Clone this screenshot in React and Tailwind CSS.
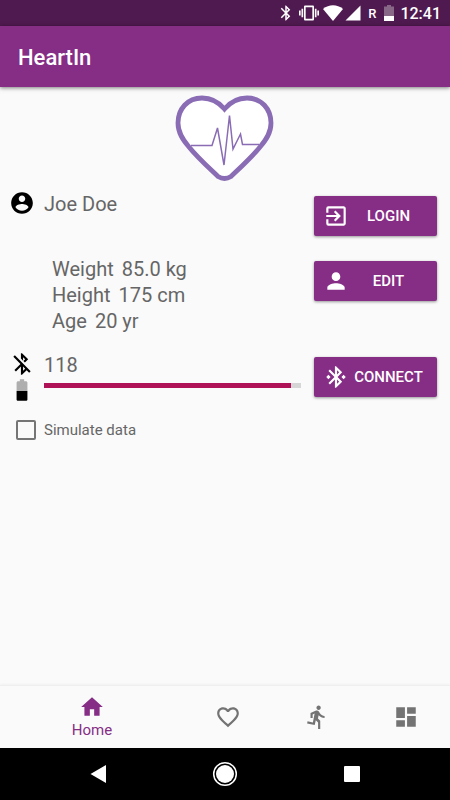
import {
  MdBluetooth,
  MdBluetoothConnected,
  MdBluetoothDisabled,
  MdBattery50,
  MdDashboard,
  MdDirectionsRun,
  MdExitToApp,
  MdFavoriteBorder,
  MdPerson,
  MdSignalCellular4Bar,
  MdVibration,
} from "react-icons/md";

const AccountIcon = () => (
  <svg viewBox="0 0 24 24" className="size-[26px] text-black" fill="currentColor">
    <path d="M12 2C6.48 2 2 6.48 2 12s4.48 10 10 10 10-4.48 10-10S17.52 2 12 2zm0 3c1.66 0 3 1.34 3 3s-1.34 3-3 3-3-1.34-3-3 1.34-3 3-3zm0 14.2c-2.5 0-4.71-1.28-6-3.22.03-1.99 4-3.08 6-3.08 1.99 0 5.97 1.09 6 3.08-1.29 1.94-3.5 3.22-6 3.22z" />
  </svg>
);

const HomeIcon = () => (
  <svg viewBox="0 0 24 24" className="size-[26px]" fill="currentColor">
    <path d="M10 20v-6h4v6h5v-8h3L12 3 2 12h3v8z" />
  </svg>
);

const HeartLogo = () => (
  <svg viewBox="0 0 100 86" className="h-[86px] w-[100px]" fill="none" stroke="#8a6cb5">
    <path
      d="M49.500 14C44 7.500 36 3 27 3C12.500 3 3 14 3 28C3 38 8 45 14 52C22 62 33 72 43 81.500Q49.500 85.500 56 81.500C66 72 77 62 85 52C91 45 96 38 96 28C96 14 86.500 3 72 3C63 3 55 7.500 49.500 14Z"
      fill="#fff"
      strokeWidth="4.800"
    />
    <path d="M16 50.500H37L42.500 33L49 70L54.500 20.500L58 54L65.500 39L67.500 49.500H84" strokeWidth="1.500" />
  </svg>
);

const StatusBar = () => (
  <div className="flex h-[26px] items-center justify-end bg-[#4f1a4f] pr-[9px] text-white">
    <MdBluetooth className="size-[18px]" />
    <MdVibration className="ml-1 size-5" />
    <svg viewBox="0 0 20 16" className="ml-1 h-4 w-5" fill="currentColor">
      <path d="M10 16L0 4C6 -1 14 -1 20 4Z" />
    </svg>
    <MdSignalCellular4Bar className="ml-px size-[18px]" />
    <span className="ml-[6px] pt-px text-[13px] font-medium">R</span>
    <svg viewBox="0 0 10 16" className="ml-2 h-4 w-[10px]">
      <path d="M0 1.500H3V0H7V1.500H10V11H0Z" fill="#876887" />
      <path d="M0 11H10V16H0Z" fill="#fff" />
    </svg>
    <span className="ml-[6px] pt-[2px] text-base font-medium">12:41</span>
  </div>
);

const ActionButton = ({ icon: Icon, children }) => (
  <button className="flex h-10 w-full items-center rounded-[2px] bg-[#862d86] pr-[9px] pl-[9px] text-[15px] font-medium text-white shadow-[0_1px_3px_rgba(0,0,0,0.4)]">
    <Icon className="size-[26px] shrink-0" />
    <span className="flex-1 pt-px text-center">{children}</span>
  </button>
);

const stats = [
  { name: "Weight", value: "85.0 kg" },
  { name: "Height", value: "175 cm" },
  { name: "Age", value: "20 yr" },
];

const tabs = [
  { name: "Heart rate", icon: MdFavoriteBorder },
  { name: "Activity", icon: MdDirectionsRun },
  { name: "Dashboard", icon: MdDashboard },
];

const App = () => {
  return (
    <div className="flex min-h-screen flex-col bg-[#fafafa] font-['Roboto',sans-serif] text-[#666]">
      <StatusBar />
      <header className="z-10 flex h-[61px] items-center bg-[#862d86] px-[18px] pt-[2px] shadow-[0_1px_4px_rgba(0,0,0,0.5)]">
        <h1 className="text-[22px] font-medium text-white">HeartIn</h1>
      </header>

      <div className="flex justify-center pt-2">
        <HeartLogo />
      </div>

      <main className="flex-1 pt-[15px] pr-[13px] pl-[9px]">
        {/* User */}
        <section className="grid grid-cols-[35px_1fr_123px]">
          <div className="-mt-[6px]">
            <AccountIcon />
          </div>
          <p className="text-xl leading-4">Joe Doe</p>
          <ActionButton icon={MdExitToApp}>LOGIN</ActionButton>
        </section>

        {/* Body data */}
        <section className="mt-5 grid grid-cols-[1fr_123px]">
          <ul className="pl-[43px] text-xl leading-[26px]">
            {stats.map((s) => (
              <li key={s.name} className="flex gap-2">
                <span>{s.name}</span>
                <span>{s.value}</span>
              </li>
            ))}
          </ul>
          <div className="pt-[5px]">
            <ActionButton icon={MdPerson}>EDIT</ActionButton>
          </div>
        </section>

        {/* Device */}
        <section className="mt-[17px] grid grid-cols-[35px_1fr_123px]">
          <div className="text-black">
            <MdBluetoothDisabled className="size-[26px]" />
            <MdBattery50 className="size-[26px]" />
          </div>
          <div className="pr-[13px]">
            <p className="text-xl leading-7">118</p>
            <progress
              aria-label="Device battery"
              value="96"
              max="100"
              className="mt-1 block h-[5px] w-full appearance-none [&::-webkit-progress-bar]:bg-[#d6d6d6] [&::-webkit-progress-value]:bg-[#b01257]"
            />
          </div>
          <div className="pt-[6px]">
            <ActionButton icon={MdBluetoothConnected}>CONNECT</ActionButton>
          </div>
        </section>

        <label className="mt-[17px] flex items-center gap-2 pl-[7px] text-[15px] leading-5">
          <input
            type="checkbox"
            className="size-5 appearance-none rounded-[2px] border-2 border-[#757575] checked:bg-[#862d86]"
          />
          Simulate data
        </label>
      </main>

      <nav className="flex h-[63px] items-center border-t border-[#efefef] text-[#737373] shadow-[0_-1px_2px_rgba(0,0,0,0.04)]">
        <a href="#home" className="flex w-46 flex-col items-center text-[15px] leading-5 text-[#862d86]">
          <HomeIcon />
          Home
        </a>
        {tabs.map(({ name, icon: Icon }) => (
          <a key={name} href="#tab" aria-label={name} className="flex flex-1 justify-center">
            <Icon className="size-[26px]" />
          </a>
        ))}
      </nav>

      {/* System keys */}
      <div className="flex h-[52px] items-center justify-center gap-[101px] bg-black text-white">
        <button aria-label="Back">
          <svg viewBox="0 0 26 26" className="size-[26px]" fill="currentColor">
            <path d="M5.500 13L21 4V22Z" />
          </svg>
        </button>
        <button aria-label="Home">
          <svg viewBox="0 0 26 26" className="size-[26px]" fill="currentColor">
            <circle cx="13" cy="13" r="11.300" fill="none" stroke="currentColor" strokeWidth="1.500" />
            <circle cx="13" cy="13" r="9" />
          </svg>
        </button>
        <button aria-label="Recent apps">
          <svg viewBox="0 0 26 26" className="size-[26px]" fill="currentColor">
            <rect x="5" y="5" width="16" height="16" rx="1" />
          </svg>
        </button>
      </div>
    </div>
  );
};

export default App;
